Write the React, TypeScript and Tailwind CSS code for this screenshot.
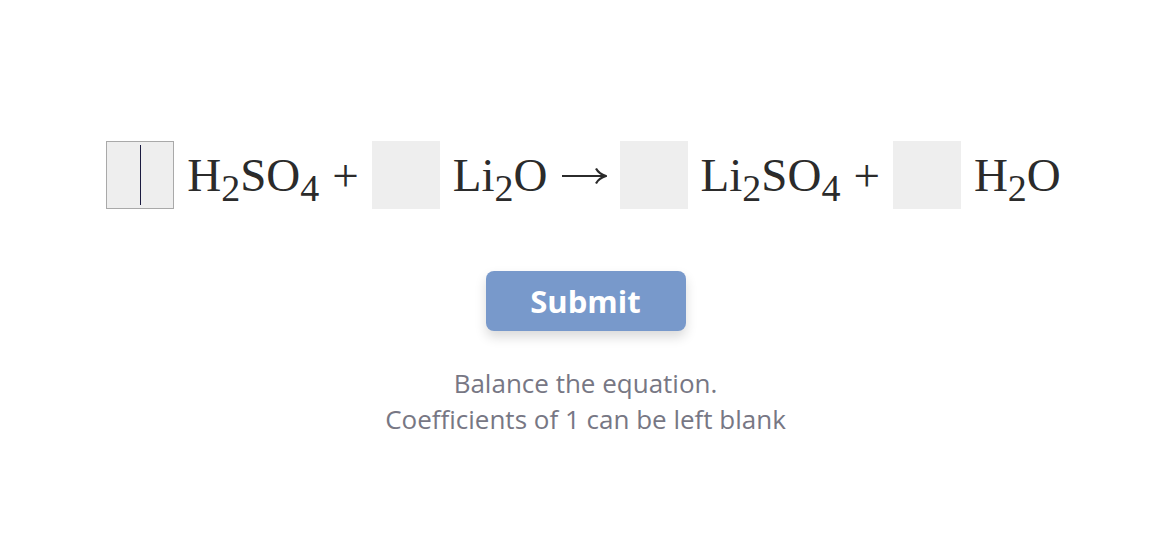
import React from 'react';

type Part = { text: string; sub?: boolean };

const serif = { fontFamily: '"Liberation Serif", Georgia, serif' };
const sans = { fontFamily: '"Open Sans", Lato, sans-serif' };

function Formula({ parts }: { parts: Part[] }) {
  return (
    <span className="whitespace-nowrap text-[47px] leading-none text-[#2b2b2b]">
      {parts.map((p, i) =>
        p.sub ? (
          <sub key={i} className="relative top-[10px] align-baseline text-[38px]">
            {p.text}
          </sub>
        ) : (
          <span key={i}>{p.text}</span>
        )
      )}
    </span>
  );
}

function CoefBox({ focused }: { focused?: boolean }) {
  return (
    <div
      className={`relative flex h-[68px] w-[68px] shrink-0 items-center justify-center bg-[#eeeeee] ${
        focused ? 'border border-[#a9a9a9]' : ''
      }`}
    >
      {focused && <span className="h-[60px] w-px bg-[#1a1a40]" />}
    </div>
  );
}

function Op({ children }: { children: React.ReactNode }) {
  return <span className="text-[47px] leading-none text-[#2b2b2b]">{children}</span>;
}

// long right arrow, drawn since the serif face only has a short one
function Arrow() {
  return (
    <svg width="46" height="20" viewBox="0 0 46 20" className="mt-[2px] shrink-0" fill="none" stroke="#2b2b2b">
      <path d="M1 10 H44" strokeWidth="2.2" />
      <path d="M35 2.5 Q38 8 45 10 Q38 12 35 17.5" strokeWidth="2.2" strokeLinejoin="round" />
    </svg>
  );
}

export default function App() {
  return (
    <div className="flex h-[557px] w-full flex-col items-center bg-white pt-[141px]">
      <div className="flex items-center gap-[13px] pr-[4px]" style={serif}>
        <CoefBox focused />
        <Formula parts={[{ text: 'H' }, { text: '2', sub: true }, { text: 'SO' }, { text: '4', sub: true }]} />
        <Op>+</Op>
        <CoefBox />
        <Formula parts={[{ text: 'Li' }, { text: '2', sub: true }, { text: 'O' }]} />
        <Arrow />
        <CoefBox />
        <Formula parts={[{ text: 'Li' }, { text: '2', sub: true }, { text: 'SO' }, { text: '4', sub: true }]} />
        <Op>+</Op>
        <CoefBox />
        <Formula parts={[{ text: 'H' }, { text: '2', sub: true }, { text: 'O' }]} />
      </div>

      <button
        className="mt-[62px] h-[60px] w-[200px] rounded-lg bg-[#7899cb] text-[31px] font-bold text-white shadow-[0_6px_12px_rgba(0,0,0,0.15)]"
        style={sans}
      >
        Submit
      </button>

      <div className="mt-[34px] text-center text-[26px] leading-[36px] text-[#777784]" style={sans}>
        <p>Balance the equation.</p>
        <p>Coefficients of 1 can be left blank</p>
      </div>
    </div>
  );
}
